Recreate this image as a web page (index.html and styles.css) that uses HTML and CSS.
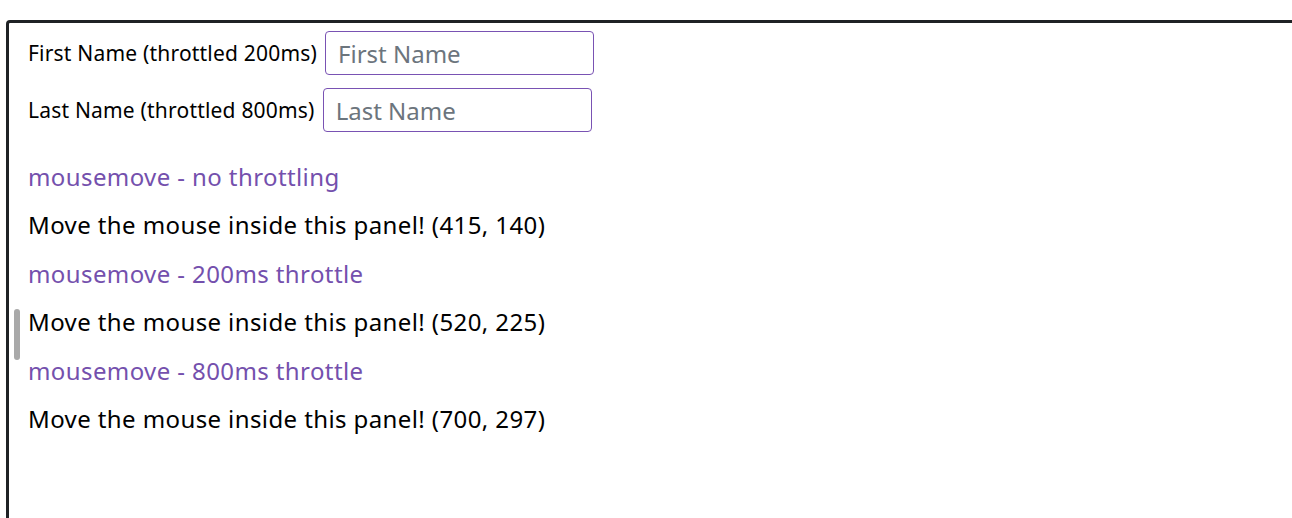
FILE: index.html
```html
<!DOCTYPE html>
<html>
<head>
<meta charset="utf-8">
<link rel="stylesheet" href="styles.css">
</head>
<body>
<div class="panel">
  <div class="field">
    <label class="label">First Name (throttled 200ms)</label>
    <input class="input" type="text" placeholder="First Name">
  </div>
  <div class="field">
    <label class="label">Last Name (throttled 800ms)</label>
    <input class="input" type="text" placeholder="Last Name">
  </div>
  <div class="events">
    <div class="heading">mousemove - no throttling</div>
    <div class="coords">Move the mouse inside this panel! (415, 140)</div>
    <div class="heading">mousemove - 200ms throttle</div>
    <div class="coords">Move the mouse inside this panel! (520, 225)</div>
    <div class="heading">mousemove - 800ms throttle</div>
    <div class="coords">Move the mouse inside this panel! (700, 297)</div>
  </div>
  <div class="scrollthumb"></div>
</div>
</body>
</html>
```
FILE: styles.css
```css
html, body {
  margin: 0;
  padding: 0;
  overflow: hidden;
  background: #fff;
}
body {
  font-family: "Noto Sans", "Open Sans", sans-serif;
  color: #000;
}
.panel {
  position: relative;
  margin: 20px 0 0 6px;
  width: 1300px;
  height: 520px;
  border: 3px solid #1f2225;
  border-radius: 4px;
  box-sizing: border-box;
  padding: 8px 20px 0 19px;
}
.field {
  display: flex;
  align-items: center;
  gap: 8px;
  margin-bottom: 13px;
}
.label {
  font-size: 21px;
  letter-spacing: 0.2px;
}
.input {
  width: 269px;
  height: 44px;
  box-sizing: border-box;
  border: 1px solid #7952b3;
  border-radius: 4px;
  padding: 0 12px;
  font-family: inherit;
  font-size: 24px;
  color: #333;
  outline: none;
}
.input::placeholder {
  color: #6c757d;
}
.events {
  display: flex;
  flex-direction: column;
  gap: 19.4px;
  margin-top: 30px;
}
.heading {
  color: #7450ad;
  font-size: 24px;
  letter-spacing: 0.4px;
  line-height: 29px;
}
.coords {
  font-size: 24px;
  letter-spacing: 0.4px;
  line-height: 29px;
}
.scrollthumb {
  position: absolute;
  left: 5px;
  top: 286px;
  width: 6px;
  height: 51px;
  border-radius: 3px;
  background: #a9a9a9;
}
```
